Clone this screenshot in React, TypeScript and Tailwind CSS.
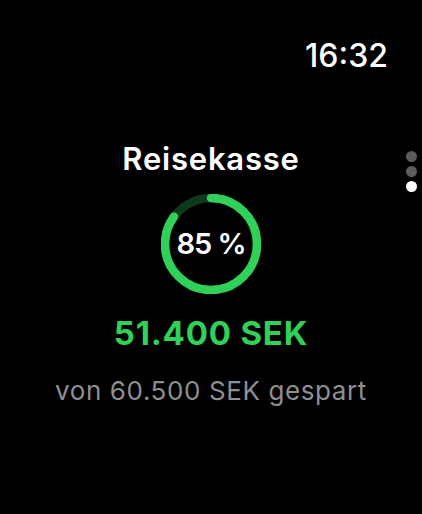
import React from 'react';

const ProgressRing = ({ value }: { value: number }) => {
  const r = 46;
  const c = 2 * Math.PI * r;
  return (
    <div className="relative w-[100px] h-[100px]">
      <svg width="100" height="100" viewBox="0 0 100 100" className="-rotate-90">
        <circle cx="50" cy="50" r={r} fill="none" stroke="#0d3a1a" strokeWidth="8.5" />
        <circle
          cx="50"
          cy="50"
          r={r}
          fill="none"
          stroke="#30d158"
          strokeWidth="8.5"
          strokeLinecap="round"
          strokeDasharray={`${c * value} ${c}`}
        />
      </svg>
      <div className="absolute inset-0 flex items-center justify-center text-white text-[29px] font-semibold tracking-[-1px]">
        85 %
      </div>
    </div>
  );
};

export default function App() {
  return (
    <div className="relative w-[422px] h-[514px] bg-black overflow-hidden font-['Inter',sans-serif]">
      <div className="flex justify-end pr-[34px] pt-[37px]">
        <span className="text-white text-[32px] leading-[38px] font-medium">16:32</span>
      </div>

      <div className="flex flex-col items-center pt-[65px]">
        <h1 className="text-white text-[31px] leading-[38px] font-semibold tracking-[0.8px]">Reisekasse</h1>
        <div className="mt-[16px]">
          <ProgressRing value={0.85} />
        </div>
        <div className="mt-[19px] text-[#30d158] text-[33px] leading-[40px] font-bold tracking-[0.8px]">51.400 SEK</div>
        <div className="mt-[22px] text-[#8e8e93] text-[26px] leading-[32px] tracking-[0.6px]">von 60.500 SEK gespart</div>
      </div>

      <div className="absolute right-[5px] top-[151px] flex flex-col gap-[4px]">
        <span className="w-[11px] h-[11px] rounded-full bg-[#5c5c5e]" />
        <span className="w-[11px] h-[11px] rounded-full bg-[#5c5c5e]" />
        <span className="w-[11px] h-[11px] rounded-full bg-white" />
      </div>
    </div>
  );
}
